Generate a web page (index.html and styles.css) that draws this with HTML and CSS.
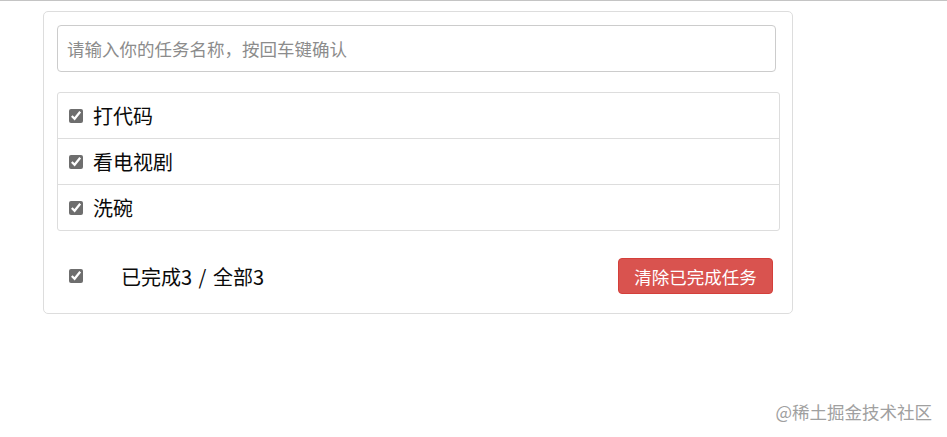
FILE: index.html
```html
<!DOCTYPE html>
<html lang="zh-CN">
<head>
<meta charset="utf-8">
<title>Todo</title>
<link rel="stylesheet" href="styles.css">
</head>
<body>
<div class="topline"></div>
<div class="card">
  <input class="task-input" type="text" placeholder="请输入你的任务名称，按回车键确认">
  <ul class="list">
    <li class="item"><label><input type="checkbox" checked><span>打代码</span></label></li>
    <li class="item"><label><input type="checkbox" checked><span>看电视剧</span></label></li>
    <li class="item"><label><input type="checkbox" checked><span>洗碗</span></label></li>
  </ul>
  <div class="footer">
    <label class="all"><input type="checkbox" checked></label>
    <span class="count">已完成3 / 全部3</span>
    <button class="btn-danger">清除已完成任务</button>
  </div>
</div>
<div class="watermark">@稀土掘金技术社区</div>
</body>
</html>
```
FILE: styles.css
```css
html, body {
  margin: 0;
  padding: 0;
  background: #fff;
  font-family: "Microsoft YaHei", "Noto Sans CJK SC", "Liberation Sans", sans-serif;
  color: #0a0a0a;
}
.topline {
  height: 1px;
  background: #c4c4c4;
}
.card {
  box-sizing: border-box;
  margin: 10px 0 0 43px;
  width: 750px;
  height: 303px;
  border: 1px solid #ddd;
  border-radius: 5px;
  padding: 13px 12px 0 13px;
}
.task-input {
  box-sizing: border-box;
  display: block;
  width: 719px;
  height: 47px;
  border: 1px solid #ccc;
  border-radius: 4px;
  padding: 0 9px;
  font-family: inherit;
  font-size: 17.5px;
  outline: none;
}
.task-input::placeholder {
  color: #8c8c8c;
}
.list {
  list-style: none;
  margin: 20px 0 0 0;
  padding: 0;
  width: 723px;
  box-sizing: border-box;
  border: 1px solid #ddd;
  border-radius: 3px;
}
.item {
  height: 45px;
  border-top: 1px solid #ddd;
  display: flex;
  align-items: center;
  padding-left: 11px;
}
.item:first-child {
  border-top: none;
}
.item label {
  display: flex;
  align-items: center;
  font-size: 20px;
}
input[type="checkbox"] {
  width: 14px;
  height: 14px;
  margin: 0 10px 0 0;
  accent-color: #6e6e6e;
}
.footer {
  display: flex;
  align-items: center;
  height: 36px;
  margin-top: 27px;
  padding: 0 7px 0 12px;
  width: 723px;
  box-sizing: border-box;
}
.all {
  display: flex;
  align-items: center;
}
.all input[type="checkbox"] {
  margin-right: 38px;
}
.count {
  font-size: 20px;
  word-spacing: 2px;
}
.btn-danger {
  margin-left: auto;
  box-sizing: border-box;
  width: 155px;
  height: 36px;
  background: #d9534f;
  border: 1px solid #d43f3a;
  border-radius: 4px;
  color: #fff;
  font-family: inherit;
  font-size: 17.5px;
  padding: 0;
}
.watermark {
  position: absolute;
  right: 15px;
  top: 399px;
  font-size: 17.5px;
  color: #a0a0a0;
}
```
